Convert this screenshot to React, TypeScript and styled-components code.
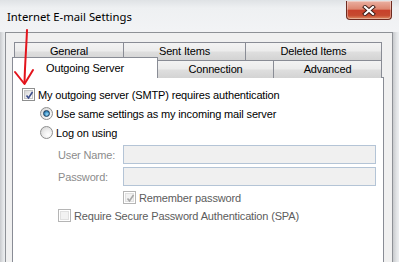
import React from 'react';
import styled, { createGlobalStyle } from 'styled-components';

const GlobalStyle = createGlobalStyle`
  html, body { margin: 0; padding: 0; background: #fff; }
  body { font-family: "Liberation Sans", Arial, sans-serif; }
`;

const Window = styled.div`
  position: relative;
  width: 399px;
  height: 262px;
  overflow: hidden;
  display: flex;
  flex-direction: column;
  background: linear-gradient(180deg, #dfe2e5 0px, #eef0f2 8px, #f2f3f5 30px, #e8eaed 100%);
`;

const TitleBar = styled.div`
  height: 32px;
  flex-shrink: 0;
  display: flex;
  align-items: flex-start;
  padding: 0 7px;
`;

const Title = styled.div`
  font-family: "Noto Sans", sans-serif;
  font-size: 11.3px;
  line-height: 16px;
  margin-top: 9px;
  color: #000;
`;

const CloseButton = styled.div`
  margin-left: auto;
  margin-top: 1px;
  width: 46px;
  height: 19px;
  box-sizing: border-box;
  border: 1px solid #6e2b20;
  border-top: none;
  border-radius: 0 0 4px 4px;
  background: linear-gradient(180deg, #eab0a2 0%, #dd8670 45%, #c8412b 52%, #c64a30 80%, #de8c62 100%);
  box-shadow: inset 0 0 0 1px rgba(255, 255, 255, 0.35);
  display: flex;
  align-items: center;
  justify-content: center;
`;

const Frame = styled.div`
  flex: 1;
  min-height: 0;
  display: flex;
  overflow: hidden;
`;

const FrameEdge = styled.div<{ $w: number }>`
  width: ${p => p.$w}px;
  flex-shrink: 0;
  background: linear-gradient(90deg, #c8cacd 0%, #e2e4e6 60%, #eceef0 100%);
`;

const Client = styled.div`
  flex: 1;
  background: #f0f0f0;
  border: 1px solid #8e9196;
  border-bottom: none;
  padding: 9px 8px 0 6px;
  display: flex;
  flex-direction: column;
`;

const TabRow = styled.div<{ $front?: boolean }>`
  display: flex;
  height: 18px;
  padding-left: ${p => (p.$front ? 0 : 2)}px;
  position: relative;
  z-index: ${p => (p.$front ? 2 : 1)};
`;

const Tab = styled.div<{ $w: number; $active?: boolean }>`
  box-sizing: border-box;
  width: ${p => p.$w}px;
  height: ${p => (p.$active ? 21 : 18)}px;
  margin-left: -1px;
  margin-top: ${p => (p.$active ? -3 : 0)}px;
  &:first-child { margin-left: 0; }
  border: 1px solid #898c95;
  border-bottom: none;
  background: ${p =>
    p.$active
      ? '#fff'
      : 'linear-gradient(180deg, #f3f3f3 0%, #ececec 45%, #dedede 55%, #d3d3d3 100%)'};
  position: relative;
  z-index: ${p => (p.$active ? 3 : 1)};
  display: flex;
  align-items: center;
  justify-content: center;
  font-size: 11px;
  letter-spacing: -0.15px;
  color: #000;
  padding-bottom: ${p => (p.$active ? 1 : 1)}px;
`;

const Pane = styled.div`
  margin-top: -1px;
  height: 220px;
  flex-shrink: 0;
  background: #fff;
  border: 1px solid #898c95;
  display: flex;
  flex-direction: column;
  padding-top: 7px;
`;

const Row = styled.div<{ $indent: number; $h?: number; $top?: number }>`
  display: flex;
  align-items: center;
  height: ${p => p.$h ?? 19}px;
  padding-left: ${p => p.$indent}px;
  margin-top: ${p => p.$top ?? 0}px;
`;

const Label = styled.span<{ $muted?: boolean }>`
  font-size: 11px;
  letter-spacing: -0.15px;
  color: ${p => (p.$muted ? '#5c5c5c' : '#000')};
  margin-left: 3px;
  white-space: nowrap;
`;

const FieldLabel = styled.span`
  width: 65px;
  font-size: 11px;
  letter-spacing: -0.15px;
  color: #8c8c8c;
`;

const Input = styled.div`
  width: 253px;
  height: 19px;
  box-sizing: border-box;
  border: 1px solid #b4c4d6;
  background: #f0f0f0;
`;

const Box = styled.div<{ $disabled?: boolean }>`
  position: relative;
  width: 13px;
  height: 13px;
  box-sizing: border-box;
  flex-shrink: 0;
  border: 1px solid ${p => (p.$disabled ? '#b5b5b5' : '#8e8f8f')};
  padding: 1px;
  background: #fff;
  display: flex;
`;

const BoxInner = styled.div<{ $disabled?: boolean }>`
  flex: 1;
  background: ${p =>
    p.$disabled ? '#f2f2f2' : 'linear-gradient(135deg, #d4d4d4 0%, #f0f0f0 60%, #fbfbfb 100%)'};
  border: 1px solid ${p => (p.$disabled ? '#e0e0e0' : '#c4c4c4')};
  display: flex;
  align-items: center;
  justify-content: center;
`;

const Radio = styled.div`
  width: 13px;
  height: 13px;
  box-sizing: border-box;
  flex-shrink: 0;
  border-radius: 50%;
  border: 1px solid #8e8f8f;
  background: radial-gradient(circle at 65% 70%, #ffffff 0%, #f0f0f0 40%, #cfcfcf 100%);
  display: flex;
  align-items: center;
  justify-content: center;
`;

const RadioDot = styled.div`
  width: 5px;
  height: 5px;
  border-radius: 50%;
  border: 1px solid #1b3d5c;
  background: radial-gradient(circle at 60% 65%, #9edcf7 0%, #3b8fc4 55%, #1d5b8a 100%);
`;

const CheckMark = styled.svg`
  position: absolute;
  left: 2px;
  top: 2px;
`;

const Arrow = styled.svg`
  position: absolute;
  left: 0;
  top: 0;
  pointer-events: none;
  z-index: 10;
`;

const CheckBox = ({ checked, disabled }: { checked?: boolean; disabled?: boolean }) => (
  <Box $disabled={disabled}>
    <BoxInner $disabled={disabled} />
    {checked && (
      <CheckMark width="9" height="9" viewBox="0 0 9 9">
        <path d="M1.5 4.5 L3.5 7 L7.5 1" fill="none" stroke={disabled ? '#a8a8a8' : '#3d4f8d'} strokeWidth="1.6" />
      </CheckMark>
    )}
  </Box>
);

export default function App() {
  return (
    <>
      <GlobalStyle />
      <Window>
        <TitleBar>
          <Title>Internet E-mail Settings</Title>
          <CloseButton>
            <svg width="14" height="11" viewBox="0 0 14 11">
              <path d="M3 2 L11 9 M11 2 L3 9" stroke="#3a1a14" strokeWidth="4" strokeLinecap="square" />
              <path d="M3 2 L11 9 M11 2 L3 9" stroke="#fff" strokeWidth="2.2" strokeLinecap="square" />
            </svg>
          </CloseButton>
        </TitleBar>
        <Frame>
          <FrameEdge $w={5} />
          <Client>
            <TabRow>
              <Tab $w={110}>General</Tab>
              <Tab $w={123}>Sent Items</Tab>
              <Tab $w={137}>Deleted Items</Tab>
            </TabRow>
            <TabRow $front>
              <Tab $w={146} $active>Outgoing Server</Tab>
              <Tab $w={117}>Connection</Tab>
              <Tab $w={109}>Advanced</Tab>
            </TabRow>
            <Pane>
              <Row $indent={9}>
                <CheckBox checked />
                <Label>My outgoing server (SMTP) requires authentication</Label>
              </Row>
              <Row $indent={27}>
                <Radio><RadioDot /></Radio>
                <Label>Use same settings as my incoming mail server</Label>
              </Row>
              <Row $indent={27}>
                <Radio />
                <Label>Log on using</Label>
              </Row>
              <Row $indent={45} $top={3}>
                <FieldLabel>User Name:</FieldLabel>
                <Input />
              </Row>
              <Row $indent={45} $top={3}>
                <FieldLabel>Password:</FieldLabel>
                <Input />
              </Row>
              <Row $indent={110} $top={3} $h={17}>
                <CheckBox checked disabled />
                <Label $muted>Remember password</Label>
              </Row>
              <Row $indent={45}>
                <CheckBox disabled />
                <Label $muted>Require Secure Password Authentication (SPA)</Label>
              </Row>
            </Pane>
          </Client>
          <FrameEdge $w={6} />
        </Frame>
        <Arrow width="399" height="262" viewBox="0 0 399 262">
          <path d="M27 30 C26.5 45 25 62 24.5 83" fill="none" stroke="#e3141c" strokeWidth="2" strokeLinecap="round" />
          <path d="M15 72 L24.5 84 L33 70" fill="none" stroke="#e3141c" strokeWidth="2" strokeLinecap="round" strokeLinejoin="round" />
        </Arrow>
      </Window>
    </>
  );
}
